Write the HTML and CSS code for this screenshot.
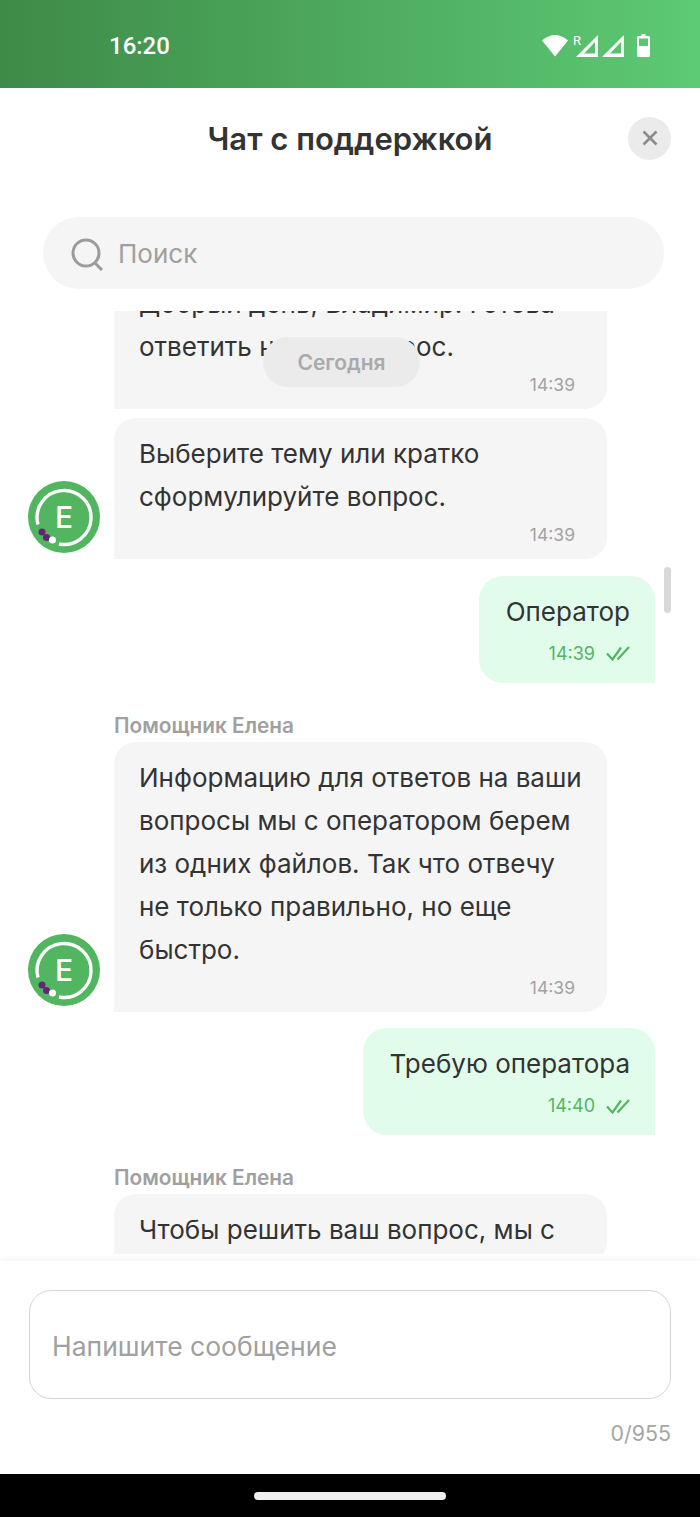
FILE: index.html
```html
<!DOCTYPE html>
<html lang="ru">
<head>
  <meta charset="UTF-8" />
  <meta name="viewport" content="width=device-width, initial-scale=1" />
  <title>Чат с поддержкой</title>
  <link rel="stylesheet" href="styles.css">
</head>
<body>
  <!-- Status bar -->
  <div class="status-bar">
    <div class="clock">16:20</div>
    <div class="status-icons">
      <svg class="wifi" width="26" height="23" viewBox="0 0 26 23"><path d="M0 6.5Q13 -4.5 26 6.5L13 22.5Z" fill="#fff"/></svg>
      <span class="roaming">R</span>
      <svg class="signal" width="22" height="22" viewBox="0 0 22 22"><path d="M0 22L22 0V22ZM19 7V18.500H8Z" fill="#fff" fill-rule="evenodd"/></svg>
      <svg class="signal second" width="22" height="22" viewBox="0 0 22 22"><path d="M0 22L22 0V22ZM19 7V18.500H8Z" fill="#fff" fill-rule="evenodd"/></svg>
      <svg class="battery" width="13" height="23" viewBox="0 0 13 23"><path d="M4.500 0H8.500V2H11.500Q13 2 13 3.500V21.500Q13 23 11.500 23H1.500Q0 23 0 21.500V3.500Q0 2 1.500 2H4.500ZM2 4.500V12H11V4.500Z" fill="#fff" fill-rule="evenodd"/></svg>
    </div>
  </div>

  <div class="header">
    <div></div>
    <h1 class="title">Чат с поддержкой</h1>
    <div class="close-btn">
      <svg width="16" height="16" viewBox="0 0 16 16"><path d="M1.5 1.5L14.5 14.5M14.5 1.5L1.5 14.5" stroke="#8c8c8c" stroke-width="2.6" fill="none"/></svg>
    </div>
  </div>

  <div class="search">
    <svg width="32" height="33" viewBox="0 0 32 33"><circle cx="15" cy="15" r="13" stroke="#9b9b9b" stroke-width="3" fill="none"/><path d="M23 24L31 32" stroke="#9b9b9b" stroke-width="3" fill="none"/></svg>
    <span class="search-text">Поиск</span>
  </div>

  <!-- Messages -->
  <div class="messages">
    <div class="date-pill">Сегодня</div>
    <div class="scrollbar"></div>

    <div class="row incoming first">
      <div class="bubble">
        <div class="text">Добрый день, Владимир! Готова ответить на ваш вопрос.</div>
        <div class="time">14:39</div>
      </div>
    </div>

    <div class="row incoming with-avatar next">
      <svg class="avatar" width="72" height="72" viewBox="0 0 72 72">
        <circle cx="36" cy="36" r="36" fill="#52b560"/>
        <path d="M31 63A27 27 0 1 0 10 43.5" stroke="#fff" stroke-width="3.4" fill="none"/>
        <circle cx="14" cy="51" r="3.5" fill="#682277"/>
        <circle cx="18.5" cy="56.5" r="3.5" fill="#682277"/>
        <circle cx="24.5" cy="59" r="3.5" fill="#fff"/>
        <text x="36" y="47" text-anchor="middle" class="avatar-letter">E</text>
      </svg>
      <div class="bubble">
        <div class="text">Выберите тему или кратко сформулируйте вопрос.</div>
        <div class="time">14:39</div>
      </div>
    </div>

    <div class="row outgoing">
      <div class="bubble sent">
        <div class="text">Оператор</div>
        <div class="time sent-time">14:39
          <svg width="24" height="15" viewBox="0 0 24 15"><path d="M1 7.5L6.5 13.5L15 1.5M11.5 13.5L23 1" stroke="#52b560" stroke-width="2.2" fill="none"/></svg>
        </div>
      </div>
    </div>

    <div class="sender">Помощник Елена</div>
    <div class="row incoming with-avatar">
      <svg class="avatar" width="72" height="72" viewBox="0 0 72 72">
        <circle cx="36" cy="36" r="36" fill="#52b560"/>
        <path d="M31 63A27 27 0 1 0 10 43.5" stroke="#fff" stroke-width="3.4" fill="none"/>
        <circle cx="14" cy="51" r="3.5" fill="#682277"/>
        <circle cx="18.5" cy="56.5" r="3.5" fill="#682277"/>
        <circle cx="24.5" cy="59" r="3.5" fill="#fff"/>
        <text x="36" y="47" text-anchor="middle" class="avatar-letter">E</text>
      </svg>
      <div class="bubble">
        <div class="text">Информацию для ответов на ваши вопросы мы с оператором берем из одних файлов. Так что отвечу не только правильно, но еще быстро.</div>
        <div class="time">14:39</div>
      </div>
    </div>

    <div class="row outgoing">
      <div class="bubble sent">
        <div class="text">Требую оператора</div>
        <div class="time sent-time">14:40
          <svg width="24" height="15" viewBox="0 0 24 15"><path d="M1 7.5L6.5 13.5L15 1.5M11.5 13.5L23 1" stroke="#52b560" stroke-width="2.2" fill="none"/></svg>
        </div>
      </div>
    </div>

    <div class="sender">Помощник Елена</div>
    <div class="row incoming first-visible">
      <div class="bubble">
        <div class="text">Чтобы решить ваш вопрос, мы с</div>
      </div>
    </div>
  </div>

  <!-- Input -->
  <div class="footer">
    <div class="input-box">Напишите сообщение</div>
    <div class="counter">0/955</div>
  </div>

  <div class="nav-bar"><div class="nav-pill"></div></div>
</body>
</html>
```

FILE: styles.css
```css
body {
  font-family: Inter, "Noto Sans", sans-serif;
  background: #fff;
  color: #333;
  margin: 0;
  width: 700px;
  height: 1517px;
  display: flex;
  flex-direction: column;
  overflow: hidden;
}

.status-bar {
  height: 88px;
  flex: none;
  display: flex;
  justify-content: space-between;
  align-items: center;
  padding: 0 50px 0 109px;
  background: linear-gradient(90deg, #3e8a47, #5dca75);
  color: #fff;
}

.clock {
  font-family: Roboto, sans-serif;
  font-size: 24px;
  font-weight: 500;
  margin-top: 3px;
}

.status-icons {
  display: flex;
  align-items: flex-end;
  height: 23px;
  margin-top: 3px;
}

.roaming {
  font-family: Roboto, sans-serif;
  font-size: 13px;
  line-height: 12px;
  align-self: flex-start;
  margin: 1px 0 0 5px;
  width: 6px;
}

.signal {
  margin-left: -3px;
}

.signal.second {
  margin-left: 4px;
}

.battery {
  margin-left: 13px;
}

.header {
  height: 100px;
  flex: none;
  display: grid;
  grid-template-columns: 1fr auto 1fr;
  align-items: center;
  padding: 0 29px;
}

.title {
  margin: 1px 0 0;
  font-size: 31px;
  font-weight: 600;
  color: #333;
}

.close-btn {
  justify-self: end;
  width: 43px;
  height: 43px;
  border-radius: 50%;
  background: #ebebeb;
  display: flex;
  justify-content: center;
  align-items: center;
}

.search {
  flex: none;
  height: 72px;
  margin: 29px 36px 0 43px;
  padding-left: 28px;
  border-radius: 36px;
  background: #f5f5f5;
  display: flex;
  align-items: center;
  gap: 15px;
}

.search svg {
  margin-top: 3px;
}

.search-text {
  font-size: 26px;
  color: #a0a0a0;
}

.messages {
  position: relative;
  flex: none;
  height: 943px;
  margin-top: 22px;
  overflow: hidden;
}

.date-pill {
  position: absolute;
  top: 26px;
  left: 263px;
  width: 157px;
  height: 50px;
  border-radius: 25px;
  background: #ebebeb;
  color: #aaa;
  font-size: 21px;
  font-weight: 600;
  line-height: 52px;
  text-align: center;
}

.scrollbar {
  position: absolute;
  top: 256px;
  left: 664px;
  width: 7px;
  height: 46px;
  border-radius: 4px;
  background: #d9d9d9;
}

.row {
  display: flex;
  margin-top: 16.5px;
}

.row.incoming {
  padding-left: 114px;
}

.row.with-avatar {
  padding-left: 28px;
  align-items: flex-end;
  gap: 14px;
  margin-top: 0;
}

.row.first {
  margin-top: -43px;
}

.row.next {
  margin-top: 9px;
}

.row.first-visible {
  margin-top: 0;
}

.row.outgoing {
  justify-content: flex-end;
  padding-right: 45px;
}

.avatar {
  flex: none;
  margin-bottom: 6px;
}

.avatar-letter {
  font-family: Inter, sans-serif;
  font-size: 30px;
  font-weight: 500;
  fill: #fff;
}

.bubble {
  box-sizing: border-box;
  width: 493px;
  padding: 14px 25px 12px;
  background: #f5f5f5;
  border-radius: 22px 22px 22px 0;
}

.bubble.sent {
  width: auto;
  padding: 14px 25px 17px 27px;
  background: #e2fcec;
  border-radius: 24px 24px 0 24px;
}

.text {
  font-size: 26px;
  line-height: 43px;
  color: #333;
}

.time {
  margin: 5px 7px 0 0;
  font-size: 17.5px;
  line-height: 24px;
  color: #a3a3a3;
  text-align: right;
}

.sent-time {
  margin: 9px 0 0;
  font-size: 18px;
  color: #52b560;
  display: flex;
  justify-content: flex-end;
  align-items: center;
  gap: 11px;
}

.sender {
  margin: 30px 0 4px 114px;
  font-size: 20.8px;
  font-weight: 600;
  line-height: 25px;
  color: #a0a0a0;
}

.footer {
  flex: none;
  height: 213px;
  box-sizing: border-box;
  margin-top: 7px;
  padding: 29px 29px 0;
  background: #fff;
  box-shadow: 0 -2px 6px rgba(0,0,0,0.05);
}

.input-box {
  box-sizing: border-box;
  height: 109px;
  padding: 3px 0 0 22px;
  border: 1px solid #d6d6d6;
  border-radius: 22px;
  display: flex;
  align-items: center;
  font-size: 26.5px;
  color: #a0a0a0;
}

.counter {
  margin-top: 22px;
  font-size: 21.4px;
  line-height: 24px;
  color: #a6a6a6;
  text-align: right;
}

.nav-bar {
  flex: none;
  height: 43px;
  background: #000;
  display: flex;
  justify-content: center;
  padding-top: 18px;
  box-sizing: border-box;
}

.nav-pill {
  width: 192px;
  height: 8px;
  border-radius: 4px;
  background: #f0f0f0;
}
```
